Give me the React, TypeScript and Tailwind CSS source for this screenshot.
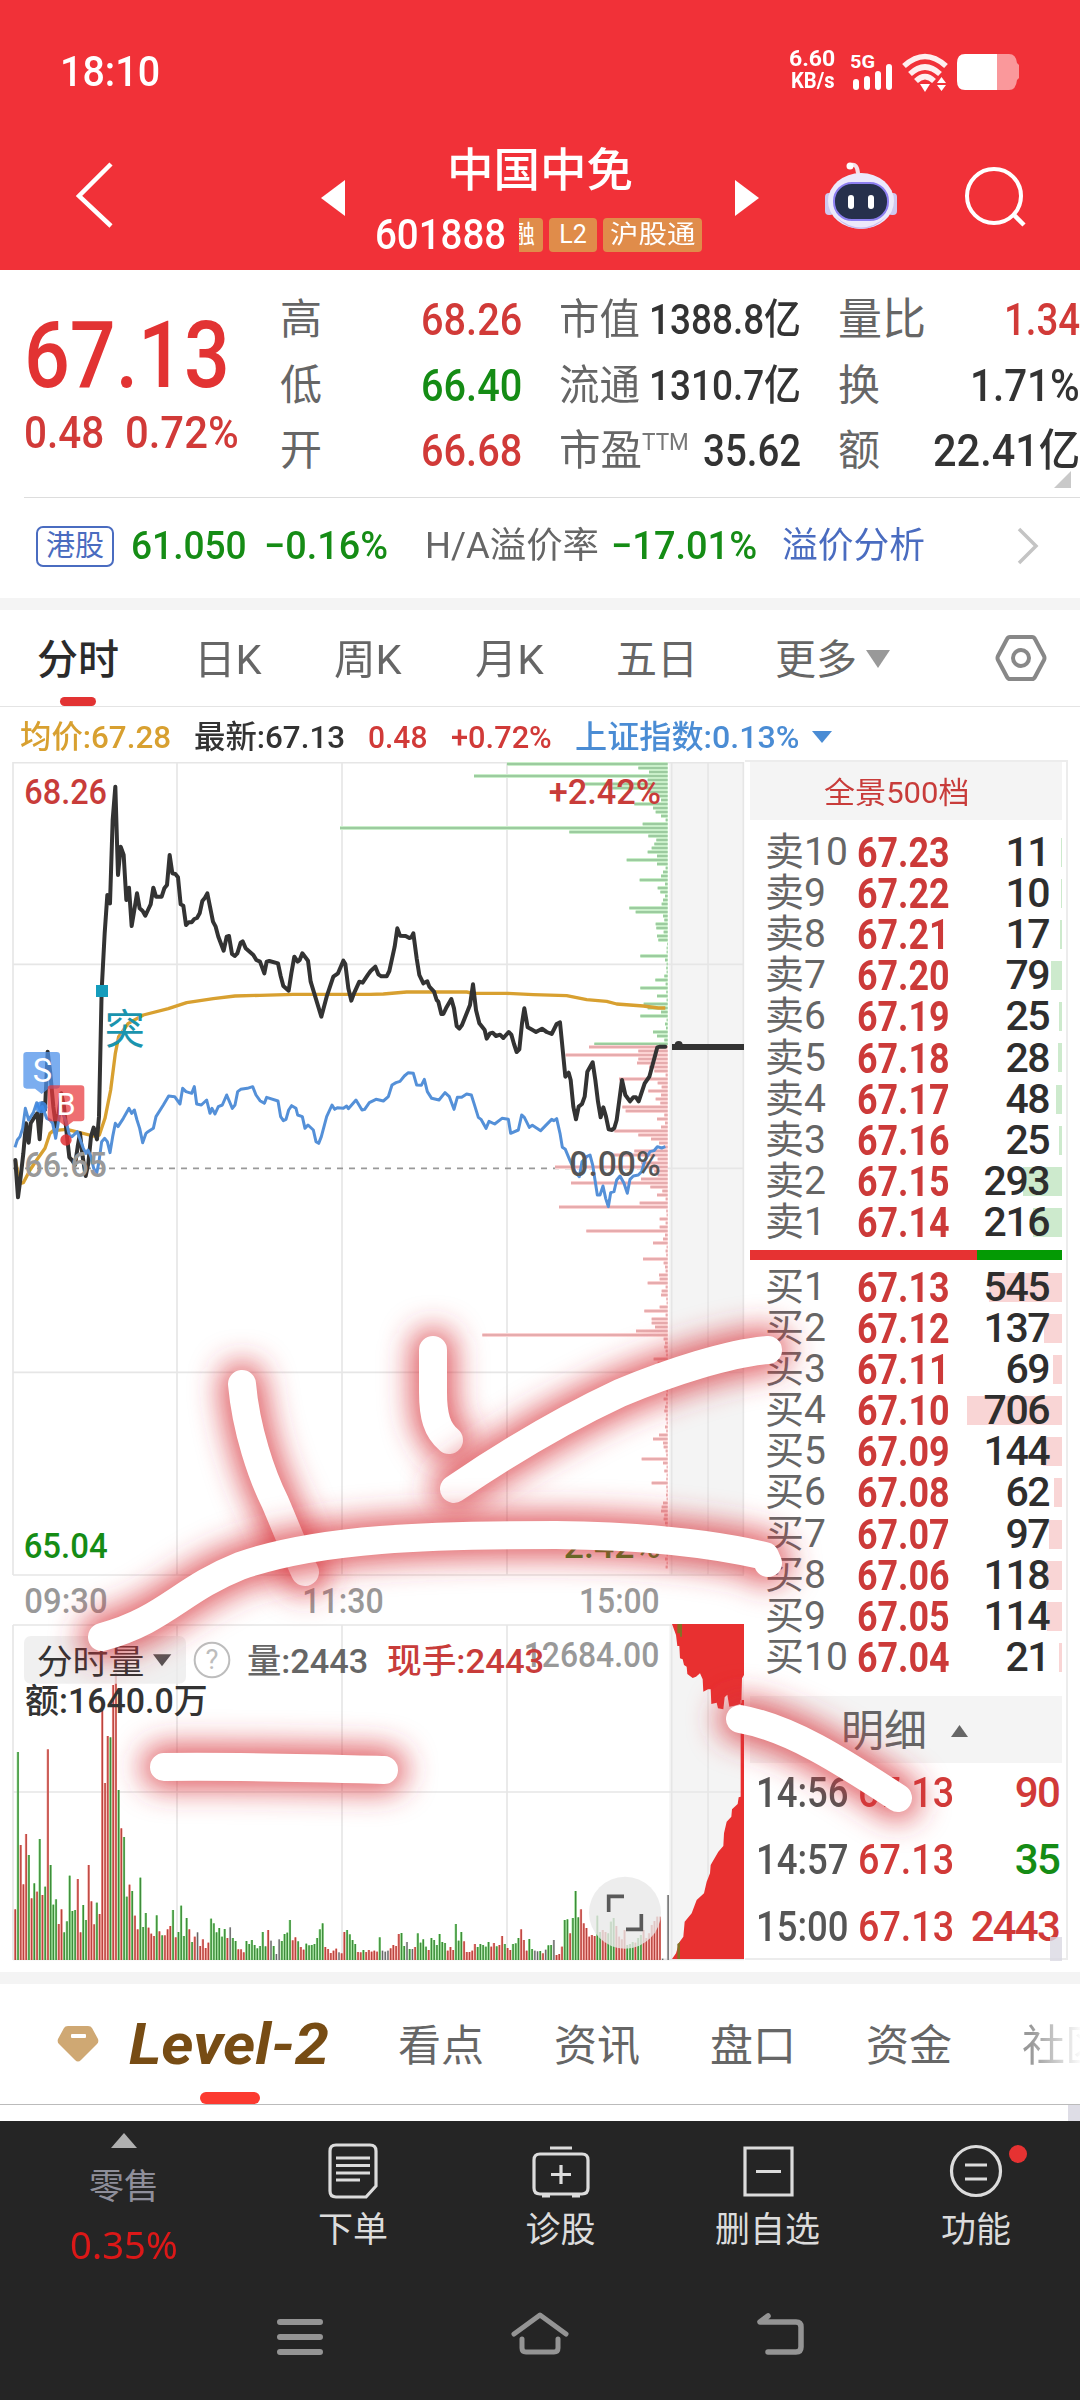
import React, { useLayoutEffect, useRef, useState } from 'react';

interface FitProps {
  className?: string;
  children: React.ReactNode;
}

// Squeezes its text horizontally so that it fills the width given by the class name
const Fit: React.FC<FitProps> = ({ className = '', children }) => {
  const outer = useRef<HTMLSpanElement>(null);
  const inner = useRef<HTMLSpanElement>(null);
  const [scale, setScale] = useState(1);

  useLayoutEffect(() => {
    if (outer.current && inner.current) {
      setScale(outer.current.clientWidth / inner.current.offsetWidth);
    }
  }, [children]);

  return (
    <span ref={outer} className={`block shrink-0 ${className}`}>
      <span ref={inner} className="inline-block origin-left whitespace-nowrap" style={{ transform: `scaleX(${scale})` }}>
        {children}
      </span>
    </span>
  );
};

const StatusBar = () => (
  <div className="flex h-[130px] items-end pb-[38px] pl-[60px] pr-[60px] text-white">
    <Fit className="w-[100px] text-[43px] font-medium leading-[42px]">18:10</Fit>
    <div className="flex-1" />
    <div className="flex flex-col items-end text-[22px] font-bold leading-[22px]">
      <Fit className="w-[46px]">6.60</Fit>
      <Fit className="w-[44px]">KB/s</Fit>
    </div>
    <svg className="ml-[16px] h-[40px] w-[43px]" viewBox="0 0 43 40" fill="#fff">
      <text x="-1" y="16" fontSize="18" fontWeight="700" textLength="25" lengthAdjust="spacingAndGlyphs">5G</text>
      <rect x="2" y="27" width="6" height="11" rx="3" />
      <rect x="13" y="24" width="6" height="14" rx="3" />
      <rect x="24" y="19" width="6" height="19" rx="3" />
      <rect x="35" y="12" width="6" height="26" rx="3" />
    </svg>
    <svg className="ml-[8px] h-[40px] w-[46px]" viewBox="0 0 46 40">
      <g fill="none" stroke="#fff" strokeOpacity=".92" strokeWidth="5.5">
        <path d="M2 14 Q23 -5 44 14" />
        <path d="M8 22 Q23 8 38 22" />
        <path d="M14 29 Q23 20 32 29" />
      </g>
      <path d="M18 32 h10 l-5 8z M35 31 l4.500 -6 l4.500 6z M35 33 l4.500 6 l4.500 -6z" fill="#fff" />
    </svg>
    <svg className="ml-[8px] h-[40px] w-[64px]" viewBox="0 0 64 40">
      <path d="M41 2 h12 q7 0 8 9 l2 2 v13 l-2 2 q-1 10 -8 10 h-12z" fill="#fa989b" />
      <path d="M41 2 H9 Q1 2 1 11 V29 Q1 38 9 38 H41z" fill="#fff" />
    </svg>
  </div>
);

const Robot = () => (
  <svg className="h-[70px] w-[76px]" viewBox="0 0 76 70">
    <path d="M28 4 q6 -2 7 8" fill="none" stroke="#f5dfe8" strokeWidth="4" strokeLinecap="round" />
    <circle cx="27" cy="5" r="3.500" fill="#fff" />
    <rect x="2" y="32" width="9" height="22" rx="4" fill="#cfc8f0" />
    <rect x="65" y="32" width="9" height="22" rx="4" fill="#cfc8f0" />
    <ellipse cx="38" cy="40" rx="33" ry="28" fill="#ece9fb" />
    <path d="M12 55 Q38 78 64 55 Q52 68 38 68 Q24 68 12 55z" fill="#c7bdf2" />
    <rect x="11" y="22" width="54" height="37" rx="18" fill="#26304c" stroke="#8d7ff0" strokeWidth="2" />
    <rect x="25" y="34" width="6" height="14" rx="3" fill="#fff" />
    <rect x="45" y="34" width="6" height="14" rx="3" fill="#fff" />
  </svg>
);

const NavBar = () => (
  <div className="flex h-[141px] text-white">
    <svg className="ml-[74px] mt-[30px] h-[70px] w-[42px]" viewBox="0 0 42 70">
      <path d="M37 4 L5 36 L37 66" fill="none" stroke="#fff" strokeWidth="4.500" />
    </svg>
    <svg className="ml-[205px] mt-[50px] h-[36px] w-[24px]" viewBox="0 0 24 36">
      <path d="M24 0 V36 L0 18z" fill="#fff" />
    </svg>
    <div className="ml-[29px] flex w-[330px] flex-col">
      <Fit className="ml-[73px] mt-[14px] w-[186px] text-[46px] font-medium leading-[52px]">中国中免</Fit>
      <div className="mt-[17px] flex h-[44px] items-center">
        <Fit className="ml-[1px] w-[131px] text-[42px] font-medium leading-[44px]">601888</Fit>
        <div className="ml-[13px] flex h-[34px] gap-[6px] text-[25px] leading-[33px]">
          <span className="flex w-[24px] justify-end overflow-hidden rounded-r-[4px] bg-[#e08c4a] pr-[8px]">融</span>
          <span className="w-[48px] rounded-[4px] bg-[#e08c4a] text-center">L2</span>
          <Fit className="w-[99px] rounded-[4px] bg-[#e08c4a]">&nbsp;沪股通&nbsp;</Fit>
        </div>
      </div>
    </div>
    <svg className="ml-[31px] mt-[50px] h-[36px] w-[24px]" viewBox="0 0 24 36">
      <path d="M0 0 V36 L24 18z" fill="#fff" />
    </svg>
    <div className="ml-[64px] mt-[31px]"><Robot /></div>
    <svg className="ml-[63px] mt-[34px] h-[66px] w-[68px]" viewBox="0 0 68 66">
      <circle cx="32" cy="32" r="27" fill="none" stroke="#fff" strokeWidth="4" />
      <path d="M51 50 L62 61" stroke="#fff" strokeWidth="4.500" />
    </svg>
  </div>
);

const RED = 'text-[#d13a38]';
const GREEN = 'text-[#158c15]';

const QuotePanel = () => (
  <div className="flex h-[227px] pt-[17px] text-[44px] leading-[66px] text-[#333]">
    <div className="w-[280px] pl-[24px]">
      <Fit className="mt-[21px] w-[206px] text-[92px] font-medium leading-[96px] text-[#e23333]">67.13</Fit>
      <div className={`-mt-px flex leading-[60px] ${RED}`}>
        <Fit className="w-[80px] font-medium">0.48</Fit>
        <Fit className="ml-[21px] w-[114px] font-medium">0.72%</Fit>
      </div>
    </div>
    <div className="flex-1">
      <div className="flex h-[66px]">
        <span className="w-[141px] text-[42px] text-[#666]">高</span>
        <Fit className={`w-[101px] font-medium ${RED}`}>68.26</Fit>
        <Fit className="ml-[37px] w-[81px] text-[42px] text-[#666]">市值</Fit>
        <div className="flex w-[161px] justify-end text-[42px] font-medium"><Fit className="w-[152px]">1388.8亿</Fit></div>
        <span className="ml-[37px] w-[91px] text-[44px] text-[#666]">量比</span>
        <div className="flex flex-1 justify-end"><Fit className={`w-[76px] font-medium ${RED}`}>1.34</Fit></div>
      </div>
      <div className="flex h-[65px]">
        <span className="w-[141px] text-[42px] text-[#666]">低</span>
        <Fit className={`w-[101px] font-medium ${GREEN}`}>66.40</Fit>
        <Fit className="ml-[37px] w-[81px] text-[42px] text-[#666]">流通</Fit>
        <div className="flex w-[161px] justify-end text-[42px] font-medium"><Fit className="w-[152px]">1310.7亿</Fit></div>
        <span className="ml-[37px] w-[91px] text-[42px] text-[#666]">换</span>
        <div className="flex flex-1 justify-end"><Fit className="w-[110px] font-medium">1.71%</Fit></div>
      </div>
      <div className="relative flex h-[65px]">
        <span className="w-[141px] text-[42px] text-[#666]">开</span>
        <Fit className={`w-[101px] font-medium ${RED}`}>66.68</Fit>
        <Fit className="ml-[37px] w-[83px] text-[42px] text-[#666]">市盈</Fit>
        <Fit className="w-[47px] text-[24px] leading-[48px] text-[#777]">TTM</Fit>
        <div className="flex w-[112px] justify-end font-medium"><Fit className="w-[98px]">35.62</Fit></div>
        <span className="ml-[37px] w-[50px] text-[42px] text-[#666]">额</span>
        <div className="flex flex-1 justify-end font-medium"><Fit className="w-[147px]">22.41亿</Fit></div>
        <svg className="absolute right-[9px] top-[53px] h-[17px] w-[17px]" viewBox="0 0 17 17"><path d="M17 0V17H0z" fill="#c9c9c9" /></svg>
      </div>
    </div>
  </div>
);

const HkRow = () => (
  <>
    <div className="ml-[24px] h-px bg-[#ddd]" />
    <div className={`flex h-[100px] items-center pb-[4px] text-[39px] leading-[60px] ${GREEN}`}>
      <div className="ml-[36px] flex h-[41px] w-[78px] items-center justify-center rounded-[7px] border-2 border-[#4a6cc0] text-[29px] leading-[36px] text-[#4a6cc0]">港股</div>
      <Fit className="ml-[17px] w-[116px] font-medium">61.050</Fit>
      <Fit className="ml-[17px] w-[124px] font-medium">−0.16%</Fit>
      <Fit className="ml-[37px] w-[174px] text-[36px] text-[#666]">H/A溢价率</Fit>
      <Fit className="ml-[12px] w-[146px] font-medium">−17.01%</Fit>
      <Fit className="ml-[25px] w-[143px] text-[36px] text-[#4a6cc0]">溢价分析</Fit>
      <svg className="ml-[92px] h-[38px] w-[22px]" viewBox="0 0 22 38"><path d="M2 2 L19 19 L2 36" fill="none" stroke="#c4c4c4" strokeWidth="3.500" /></svg>
    </div>
  </>
);

const ChartTabs = () => (
  <div className="flex h-[97px] border-b border-[#e4e4e4] text-[41px] leading-[100px] text-[#666]">
    <div className="ml-[37px] w-[82px]">
      <div className="h-[87px] font-medium text-[#2b2b2b]">分时</div>
      <div className="ml-[23px] h-[9px] w-[36px] rounded-[5px] bg-[#e23333]" />
    </div>
    <Fit className="ml-[75px] w-[68px]">日K</Fit>
    <Fit className="ml-[72px] w-[68px]">周K</Fit>
    <Fit className="ml-[73px] w-[69px]">月K</Fit>
    <span className="ml-[72px] whitespace-nowrap">五日</span>
    <span className="ml-[77px] whitespace-nowrap">更多</span>
    <svg className="ml-[9px] mt-[40px] h-[18px] w-[24px]" viewBox="0 0 24 18"><path d="M0 0H24L12 18z" fill="#999" /></svg>
    <svg className="ml-[105px] mt-[22px] h-[52px] w-[52px]" viewBox="0 0 52 52" fill="none" stroke="#888" strokeWidth="4">
      <path d="M15 5 H37 Q39 5 40 7 L49 24 Q50 26 49 28 L40 45 Q39 47 37 47 H15 Q13 47 12 45 L3 28 Q2 26 3 24 L12 7 Q13 5 15 5z" />
      <circle cx="26" cy="26" r="8" />
    </svg>
  </div>
);

const Legend = () => (
  <div className="flex h-[55px] items-center pl-[20px] pt-[4px] text-[32px] font-medium leading-[50px] text-[#333]">
    <Fit className="w-[151px] text-[#d8a030]">均价:67.28</Fit>
    <Fit className="ml-[23px] w-[151px]">最新:67.13</Fit>
    <Fit className={`ml-[23px] w-[59px] ${RED}`}>0.48</Fit>
    <Fit className={`ml-[24px] w-[101px] ${RED}`}>+0.72%</Fit>
    <Fit className="ml-[23px] w-[224px] text-[#4a8cd4]">上证指数:0.13%</Fit>
    <svg className="ml-[13px] h-[12px] w-[20px]" viewBox="0 0 20 12"><path d="M0 0H20L10 12z" fill="#4a8cd4" /></svg>
  </div>
);

// Chart geometry is kept in thirds of a pixel
const PRICE =
  '46,1260 54,1372 62,1310 70,1240 78,1150 86,1208 92,1150 98,1140 104,1130 112,1120 119,1198 127,1090 135,1110 143,935 151,1000 160,1100 168,1160 176,1120 184,1060 192,1100 200,1180 208,1252 217,1262 225,1275 233,1220 240,1180 248,1250 257,1308 265,1270 273,1190 281,1163 291,1198 297,1130 305,750 314,580 322,465 330,490 338,240 346,140 354,405 362,320 371,345 379,480 387,443 395,558 403,510 411,460 419,505 428,513 436,527 444,510 452,493 460,443 468,470 485,470 493,445 501,435 509,345 517,400 526,402 534,412 542,493 550,497 558,555 566,547 575,547 583,537 591,534 599,520 607,483 615,473 622,460 631,505 639,545 647,560 655,590 671,632 680,590 687,588 696,642 704,648 712,640 722,608 728,604 737,625 760,645 769,660 780,665 793,700 800,665 808,663 834,670 842,708 850,738 866,752 874,700 883,650 893,665 899,660 907,640 924,662 932,725 964,830 980,770 1000,710 1014,700 1030,662 1036,672 1045,745 1054,782 1062,760 1078,725 1088,728 1104,704 1112,693 1126,680 1135,703 1144,709 1160,709 1168,693 1184,620 1192,565 1200,587 1217,588 1228,594 1234,592 1240,580 1250,655 1258,705 1270,730 1282,724 1288,740 1302,755 1310,780 1315,785 1324,822 1330,822 1338,805 1354,777 1362,805 1370,858 1378,866 1386,855 1410,795 1419,733 1428,810 1438,850 1454,870 1460,896 1470,880 1478,878 1488,888 1500,884 1510,894 1526,876 1534,884 1542,912 1550,936 1558,928 1566,850 1573,805 1583,862 1594,868 1608,876 1626,866 1640,876 1655,882 1670,852 1680,847 1696,1010 1706,998 1712,1020 1720,1100 1728,1138 1736,1100 1746,1092 1754,1070 1762,995 1778,967 1786,1020 1794,1085 1802,1132 1810,1102 1818,1130 1826,1168 1836,1170 1843,1164 1850,1140 1858,1080 1866,1020 1876,1065 1890,1084 1900,1072 1908,1072 1916,1084 1934,1030 1948,1010 1972,922 1980,920 1996,920';

const AVERAGE =
  '46,1260 54,1300 62,1330 70,1328 90,1290 110,1260 135,1225 150,1180 160,1172 200,1168 240,1178 280,1188 298,1185 315,1135 332,1050 346,940 356,890 385,850 430,825 505,806 560,788 640,776 705,768 780,766 880,763 1110,763 1150,762 1220,756 1400,756 1420,760 1520,760 1600,764 1700,767 1760,779 1820,784 1850,792 1930,798 1975,804 1996,804';

const INDEX =
  '45,1222 52,1200 60,1190 68,1165 76,1105 86,1140 100,1118 110,1088 119,1108 127,1100 140,1135 150,1140 158,1150 167,1195 182,1105 200,1150 208,1185 216,1190 232,1175 250,1225 258,1240 264,1230 273,1250 281,1285 290,1300 297,1265 305,1205 314,1195 322,1205 330,1238 338,1190 346,1150 354,1160 370,1135 387,1105 395,1120 403,1110 411,1140 419,1165 428,1208 438,1180 444,1175 460,1165 468,1130 490,1095 506,1068 524,1070 540,1092 548,1045 558,1055 575,1060 583,1040 590,1092 604,1095 620,1080 630,1120 636,1105 645,1122 655,1100 667,1095 680,1065 697,1105 705,1095 713,1055 722,1048 742,1045 758,1040 768,1065 780,1082 793,1090 800,1072 834,1083 842,1130 850,1142 858,1138 866,1110 875,1097 888,1105 893,1125 907,1130 915,1165 924,1155 940,1170 948,1205 956,1210 964,1190 980,1130 996,1095 1004,1108 1012,1103 1030,1105 1040,1098 1045,1106 1068,1080 1086,1110 1094,1108 1108,1088 1128,1078 1138,1080 1150,1083 1165,1070 1176,1035 1188,1028 1200,1024 1213,1008 1225,998 1240,1000 1250,1035 1264,1036 1273,1018 1282,1055 1295,1075 1317,1080 1335,1058 1348,1070 1362,1108 1372,1072 1385,1072 1400,1062 1414,1065 1422,1090 1435,1132 1443,1138 1458,1165 1467,1144 1484,1152 1506,1135 1525,1138 1532,1180 1555,1170 1565,1125 1573,1132 1588,1162 1597,1156 1622,1172 1655,1138 1662,1142 1670,1136 1680,1180 1687,1222 1696,1228 1710,1262 1725,1295 1738,1310 1746,1265 1760,1250 1770,1245 1778,1275 1785,1320 1792,1365 1800,1365 1809,1338 1817,1375 1825,1400 1832,1358 1842,1355 1850,1320 1860,1308 1872,1330 1882,1360 1890,1318 1900,1308 1915,1305 1925,1295 1935,1260 1950,1235 1962,1232 1972,1220 1985,1224 1996,1220';

// Order book widths, one price step apart
const ASK_DEPTH = [
  482, 88, 56, 581, 60, 253, 180, 60, 30, 20, 100, 44, 36, 20, 6, 75, 983, 295, 58, 34, 40, 48, 60, 32, 123, 32, 6, 14, 20, 84,
  8, 30, 22, 8, 14, 18, 115, 96, 14, 10, 36, 34, 12, 32, 28, 2, 3, 3, 82, 8, 3, 4, 3, 10, 37, 6, 82, 4, 32, 3, 72, 60, 20, 82,
  3, 8, 5, 44, 32, 10, 220,
];
const BID_DEPTH = [
  236, 88, 306, 88, 92, 56, 40, 6, 146, 30, 18, 58, 20, 36, 22, 136, 126, 10, 32, 8, 20, 160, 88, 50, 26, 10, 100, 170, 30, 80,
  338, 40, 30, 80, 290, 52, 16, 32, 6, 84, 326, 4, 3, 24, 6, 24, 244, 8, 14, 44, 3, 6, 4, 74, 12, 8, 6, 26, 24, 60, 6, 18, 20, 4,
  3, 24, 70, 6, 48, 48, 38, 95, 556, 12, 8, 10, 6, 4, 42, 30, 8, 4, 6, 10, 4, 8, 3, 5, 12, 4, 8, 10, 4, 6, 3, 8, 4, 26, 44, 14, 12,
  6, 4, 78, 14, 3, 10, 3, 4, 48, 4, 3, 5, 3, 14, 18, 20, 10, 12, 8, 6, 4, 8, 3, 6, 10, 4, 3, 8, 3, 6,
];

// Minute volume bars: colour letter and height
const VOLUME =
  'r152 g624 r345 r227 r378 g315 r185 g230 r205 g363 r195 g220 r632 g285 g166 g182 r108 r152 g83 g116 g253 g147 g150 r243 r83 g165 g120 r285 r176 r107 g172 r138 r750 r531 r672 g668 r825 r860 g510 r395 g369 g190 r226 g207 r133 r92 g247 g99 g141 r97 r79 r72 g134 r86 g74 r74 r92 r102 g150 r68 g84 g163 g72 g126 r92 g54 r70 k83 r42 r62 r36 r52 g124 g110 g83 g96 g70 g93 r66 k98 g66 g57 r32 r32 r23 g57 g48 g60 g45 g35 g42 g84 g41 r90 k58 g42 k18 k62 g57 g78 g82 g120 r59 r68 g56 r39 r31 g49 g44 g45 g48 g66 g92 g110 r39 r33 r21 r28 r34 k23 r20 r84 g90 g77 g60 g48 r24 r23 g30 r24 r30 r25 r28 r25 g68 k28 k25 k28 r35 r45 r42 r78 g81 g42 k54 g33 k33 r39 g80 g52 g62 g40 r30 g66 g60 g45 g78 g54 g51 r28 r39 r30 g108 g58 g84 r56 r24 r24 r28 r48 g39 g48 g45 g40 g54 r40 r51 g41 r45 r72 g48 r36 r30 g48 g50 g66 r92 r60 r28 g63 g33 k28 k26 g27 r20 k31 g44 g45 k60 r15 r18 r40 g120 g122 r80 g126 g207 g128 r152 r110 r96 r70 r75 r72 g133 g84 r90 r84 g80 g115 g126 r102 r70 r62 r90 g45 g48 g54 r52 g66 g75 r90 r66 r80 r105 r117 r130 r130 k4 k0 k195';

const BAR_COLORS: Record<string, [string, string]> = {
  r: ['#f79a94', '#b8443f'],
  g: ['#8fe08a', '#3f8a3c'],
  k: ['#dcdcdc', '#666666'],
};

interface LabelProps {
  x: number;
  end: number;
  y: number;
  size?: number;
  fill: string;
  weight?: number;
  children: string;
}

const Label = ({ x, end, y, size = 107, fill, weight = 500, children }: LabelProps) => (
  <text x={x - 5} y={y} fontSize={size} fontWeight={weight} fill={fill} textLength={end - x + 10} lengthAdjust="spacingAndGlyphs">
    {children}
  </text>
);

const Charts = () => (
  <svg className="h-[1210px] w-[745px] shrink-0" viewBox="0 66 2235 3630">
    <rect x="2008" y="62" width="224" height="2443" fill="#f4f4f4" />
    <rect x="2008" y="2655" width="224" height="1005" fill="#f4f4f4" />
    <g stroke="#e6e6e6" strokeWidth="5" fill="none">
      <path d="M39 68H2232 M39 673H2232 M1998 1285H2232 M39 1897H2232 M39 2505H2232" />
      <path d="M39 66V2505 M531 66V2505 M1026 66V2505 M1521 66V2505 M2015 66V2505 M2124 66V2505 M2230 66V2505" />
      <path d="M39 2655H2232 M39 3156H2232 M39 3658H2232" />
      <path d="M39 2655V3660 M531 2655V3660 M1026 2655V3660 M1521 2655V3660 M2015 2655V3660 M2124 2655V3660" />
    </g>
    <path d="M39 1285H1998" stroke="#999" strokeWidth="5" strokeDasharray="18 18" />

    {ASK_DEPTH.map((w, i) => (
      <g key={i}>
        <rect x={2003 - w} y={66 + i * 12} width={w} height="12" fill="#c9efc9" />
        <rect x={2003 - w} y={69 + i * 12} width={w} height="6" fill="#9ccb9f" />
      </g>
    ))}
    {BID_DEPTH.map((w, i) => (
      <g key={i}>
        <rect x={2003 - w} y={915 + i * 12} width={w} height="12" fill="#fbd3d3" />
        <rect x={2003 - w} y={918 + i * 12} width={w} height="6" fill="#e6abad" />
      </g>
    ))}

    <g fill="none" strokeLinejoin="round">
      <polyline points={AVERAGE} stroke="#d8a030" strokeWidth="10" />
      <polyline points={PRICE} stroke="#333" strokeWidth="12" strokeLinecap="round" />
      <polyline points={INDEX} stroke="#5490d8" strokeWidth="9" />
    </g>
    <path d="M2016 921H2232" stroke="#333" strokeWidth="18" />
    <circle cx="2036" cy="915" r="12" fill="#333" />

    <rect x="288" y="735" width="36" height="36" fill="#149cbc" />
    <Label x={319} end={429} y={912} size={122} fill="#1a94ae" weight={400}>突</Label>
    <path d="M80 936H170Q180 936 180 946V1036Q180 1046 170 1046H145L125 1062L105 1046H80Q70 1046 70 1036V946Q70 936 80 936z" fill="#4f92ea" fillOpacity=".75" />
    <text x="127" y="1026" fontSize="98" fill="#fff" textAnchor="middle">S</text>
    <circle cx="124" cy="1102" r="18" fill="#3d8ae8" fillOpacity=".85" />
    <path d="M153 1036H243Q253 1036 253 1046V1134Q253 1144 243 1144H220L198 1160L176 1144H153Q143 1144 143 1134V1046Q143 1036 153 1036z" fill="#e8383c" fillOpacity=".72" />
    <text x="198" y="1124" fontSize="92" fill="#fff" textAnchor="middle">B</text>
    <circle cx="198" cy="1200" r="17" fill="#e03034" fillOpacity=".85" />

    <Label x={78} end={316} y={191} fill="#c83c3a">68.26</Label>
    <Label x={1651} end={1978} y={191} fill="#c83c3a">+2.42%</Label>
    <Label x={78} end={316} y={1310} fill="#999">66.65</Label>
    <Label x={1713} end={1977} y={1308} fill="#555">0.00%</Label>
    <Label x={76} end={318} y={2455} fill="#158c15">65.04</Label>
    <Label x={1660} end={1977} y={2455} fill="#158c15">-2.42%</Label>
    <Label x={78} end={318} y={2619} fill="#999">09:30</Label>
    <Label x={912} end={1146} y={2619} fill="#999">11:30</Label>
    <Label x={1742} end={1974} y={2619} fill="#999">15:00</Label>

    {VOLUME.split(' ').map((bar, i) => {
      const [soft, dark] = BAR_COLORS[bar[0]];
      const h = Number(bar.slice(1));
      return (
        <g key={i}>
          <rect x={42 + i * 8.16} y={3660 - h} width="7" height={h} fill={soft} />
          <rect x={44 + i * 8.16} y={3660 - h} width="4" height={h} fill={dark} />
        </g>
      );
    })}
    <path
      transform="translate(1110 2580)"
      fill="#e83030"
      d="M906 72 L918 105 L922 138 L928 138 L930 175 L938 178 L942 195 L950 200 L952 222 L968 234 L978 230 L990 220 L998 238 L1000 275 L1014 268 L1022 268 L1024 312 L1040 308 L1044 325 L1060 328 L1064 292 L1072 284 L1078 320 L1100 316 L1114 310 L1116 235 L1122 225 V72z
         M906 1077 L918 1060 L928 1027 L940 1010 L944 965 L965 940 L980 900 L1002 880 L1010 845 L1020 820 L1022 795 L1045 755 L1060 738 L1062 700 L1070 665 L1084 650 L1086 628 L1103 612 L1106 592 L1112 590 V300 H1122 V1077z"
    />
    <path d="M2032 2652H2046V2690H2040V2680H2032z M2032 3612L2040 3606V3657H2032z" fill="#857024" />

    <rect x="72" y="2688" width="486" height="143" rx="20" fill="#ebebeb" fillOpacity=".75" />
    <Label x={115} end={428} y={2803} size={104} fill="#333" weight={400}>分时量</Label>
    <path d="M459 2743H514L486 2779z" fill="#555" />
    <circle cx="636" cy="2760" r="52" fill="none" stroke="#bdbdbd" strokeWidth="6" />
    <text x="636" y="2788" fontSize="82" fill="#bdbdbd" textAnchor="middle">?</text>
    <Label x={746} end={1100} y={2799} size={102} fill="#666">量:2443</Label>
    <Label x={1576} end={1973} y={2782} size={107} fill="#999">12684.00</Label>
    <Label x={1166} end={1628} y={2799} size={102} fill="#c83c3a">现手:2443</Label>
    <Label x={80} end={618} y={2918} size={104} fill="#333">额:1640.0万</Label>

    <circle cx="1875" cy="3518" r="108" fill="#e8e8e8" fillOpacity=".8" />
    <path d="M1826 3516V3469H1872 M1878 3568H1924V3522" fill="none" stroke="#5a5a5a" strokeWidth="11" />
  </svg>
);

interface Level {
  label: string;
  price: string;
  qty: number;
}

const SELLS: Level[] = [
  { label: '卖10', price: '67.23', qty: 11 },
  { label: '卖9', price: '67.22', qty: 10 },
  { label: '卖8', price: '67.21', qty: 17 },
  { label: '卖7', price: '67.20', qty: 79 },
  { label: '卖6', price: '67.19', qty: 25 },
  { label: '卖5', price: '67.18', qty: 28 },
  { label: '卖4', price: '67.17', qty: 48 },
  { label: '卖3', price: '67.16', qty: 25 },
  { label: '卖2', price: '67.15', qty: 293 },
  { label: '卖1', price: '67.14', qty: 216 },
];

const BUYS: Level[] = [
  { label: '买1', price: '67.13', qty: 545 },
  { label: '买2', price: '67.12', qty: 137 },
  { label: '买3', price: '67.11', qty: 69 },
  { label: '买4', price: '67.10', qty: 706 },
  { label: '买5', price: '67.09', qty: 144 },
  { label: '买6', price: '67.08', qty: 62 },
  { label: '买7', price: '67.07', qty: 97 },
  { label: '买8', price: '67.06', qty: 118 },
  { label: '买9', price: '67.05', qty: 114 },
  { label: '买10', price: '67.04', qty: 21 },
];

const LevelRow = ({ level, barColor }: { level: Level; barColor: string }) => (
  <div className="relative flex h-[41.1px] items-center pl-[15px] pr-[13px] leading-[41px]">
    <div className={`absolute right-0 top-[6px] h-[29px] ${barColor}`} style={{ width: Math.max(1, (level.qty / 706) * 95) }} />
    <span className="relative w-[92px] whitespace-nowrap text-[39px] text-[#666]">{level.label}</span>
    <Fit className="relative w-[93px] text-[42px] font-bold text-[#cc3a39]">{level.price}</Fit>
    <span className="relative flex-1 text-right text-[41px] font-medium tracking-[-1.5px] text-[#2e2e2e]">{level.qty}</span>
  </div>
);

const TRADES = [
  { time: '14:56', qty: '90', color: RED },
  { time: '14:57', qty: '35', color: GREEN },
  { time: '15:00', qty: '2443', color: RED },
];

const OrderBook = () => (
  <div className="mt-[-2px] h-[1200px] w-[323px] border-b-2 border-r-2 border-t-2 border-[#ececec] bg-white pl-[5px] pr-[4px]">
    <div className="flex h-[58px] items-center justify-center bg-[#f4f4f4] pl-0 pr-[18px] pt-[2px]">
      <Fit className="w-[146px] text-[30px] text-[#c83c3a]">全景500档</Fit>
    </div>
    <div className="mt-[12px]">
      {SELLS.map(l => <LevelRow key={l.label} level={l} barColor="bg-[#cdeacd]" />)}
    </div>
    <div className="mt-[7px] flex h-[10px]">
      <div className="w-[227px] bg-[#e63232]" />
      <div className="flex-1 bg-[#049a04]" />
    </div>
    <div className="mt-[7px]">
      {BUYS.map(l => <LevelRow key={l.label} level={l} barColor="bg-[#f9d5d5]" />)}
    </div>
    <div className="mt-[18px] flex h-[67px] items-center bg-[#f4f4f4] pl-[91px] pt-[3px] text-[43px] leading-[64px] text-[#666]">
      明细
      <svg className="ml-[24px] h-[12px] w-[17px]" viewBox="0 0 17 12"><path d="M0 12H17L8.500 0z" fill="#666" /></svg>
    </div>
    <div className="relative mt-[-4px]">
      {TRADES.map(t => (
        <div key={t.time} className="flex h-[67px] pl-[6px] pr-[3px] text-[42px] font-medium leading-[67px]">
          <Fit className="w-[93px] text-[#555]">{t.time}</Fit>
          <Fit className={`ml-[9px] w-[96px] ${RED}`}>67.13</Fit>
          <span className={`flex-1 text-right tracking-[-1.8px] ${t.color}`}>{t.qty}</span>
        </div>
      ))}
      <div className="absolute bottom-[-1px] right-0 h-[24px] w-[12px] bg-[#d9d8e2]/80" />
    </div>
  </div>
);

const STROKES = [
  'M242 1384 C246 1430 262 1476 275 1502 C287 1530 297 1556 305 1572',
  'M433 1350 V1392 C433 1416 437 1430 449 1440',
  'M454 1489 C510 1451 560 1421 620 1393 C670 1372 730 1353 768 1350',
  'M102 1637 C165 1620 180 1590 240 1566 C320 1538 430 1535 556 1535 C640 1536 710 1543 765 1556 L768 1563',
  'M164 1767 C240 1766 310 1768 384 1770',
  'M740 1719 C790 1728 840 1760 898 1798',
];

const Doodle = () => (
  <svg className="pointer-events-none absolute left-0 top-0 h-[1210px] w-[1080px]" viewBox="0 762 1080 1210">
    <defs>
      <filter id="glow" filterUnits="userSpaceOnUse" x="0" y="1200" width="1080" height="772">
        <feGaussianBlur stdDeviation="15" />
      </filter>
    </defs>
    {STROKES.map((d, i) => (
      <g key={i} fill="none" strokeLinecap="round" strokeLinejoin="round">
        <path d={d} stroke="#d8363c" strokeOpacity=".8" strokeWidth="44" filter="url(#glow)" />
        <path d={d} stroke="#fff" strokeWidth="28" />
      </g>
    ))}
  </svg>
);

const InfoTabs = () => (
  <div className="flex h-[121px] overflow-hidden border-b border-[#bbb] text-[43px] leading-[124px] text-[#666]">
    <svg className="ml-[57px] mt-[40px] h-[40px] w-[42px] shrink-0" viewBox="0 0 42 40">
      <path d="M11 2H31Q34 2 35 4L41 15Q42 18 40 20L24 36Q21 39 18 36L2 20Q0 18 1 15L7 4Q8 2 11 2z" fill="#cfa873" />
      <rect x="14" y="10" width="15" height="4" rx="1" fill="#fff" />
    </svg>
    <div className="ml-[30px] w-[204px] shrink-0">
      <Fit className="h-[108px] w-[200px] text-[57px] font-bold italic leading-[122px] text-[#774c14]">Level-2</Fit>
      <div className="ml-[71px] h-[12px] w-[60px] rounded-[6px] bg-[#fc3a30]" />
    </div>
    <div className="ml-[65px] flex shrink-0 gap-[70px] whitespace-nowrap">
      <span>看点</span>
      <span>资讯</span>
      <span>盘口</span>
      <span>资金</span>
      <span className="bg-gradient-to-r from-[#999] from-10% to-white to-70% bg-clip-text text-transparent">社区</span>
    </div>
  </div>
);

const ACTIONS = [
  {
    label: '下单',
    cell: 'w-[210px]',
    icon: (
      <>
        <path d="M12 4H46Q52 4 52 10V45L42 56H12Q6 56 6 50V10Q6 4 12 4z" />
        <path d="M12 17H46 M12 24.500H46 M12 32H46 M12 39H36" />
      </>
    ),
  },
  {
    label: '诊股',
    cell: 'w-[205px]',
    icon: (
      <>
        <path d="M8 13H50Q56 13 56 19V47Q56 53 50 53H8Q2 53 2 47V19Q2 13 8 13z M18 7H40 M29 24V43 M19 33.500H39" />
        <path d="M10 55H18 M40 55H48" />
      </>
    ),
  },
  {
    label: '删自选',
    cell: 'w-[209px]',
    icon: <path d="M6 7H53V54H6z M17 30.500H42" />,
  },
  {
    label: '功能',
    cell: 'w-[208px]',
    icon: (
      <>
        <circle cx="29" cy="30" r="24.500" />
        <path d="M18 24H40 M18 38H40" />
      </>
    ),
  },
];

const ActionBar = () => (
  <div className="relative flex h-[149px] text-[35px] text-[#dcdcdc]">
    <div className="flex w-[248px] flex-col items-center text-[#8f8f9b]">
      <svg className="mt-[12px] h-[15px] w-[26px]" viewBox="0 0 26 15"><path d="M0 15H26L13 0z" fill="#b0b0b0" /></svg>
      <span className="mt-[17px] leading-[46px]">零售</span>
      <Fit className="mt-[10px] w-[108px] font-['Noto_Sans'] text-[39px] leading-[46px] text-[#dc1818]">0.35%</Fit>
    </div>
    {ACTIONS.map(a => (
      <div key={a.label} className={`flex flex-col items-center ${a.cell}`}>
        <svg className="mt-[20px] h-[60px] w-[58px]" viewBox="0 0 58 60" fill="none" stroke="#dcdcdc" strokeWidth="3.200">{a.icon}</svg>
        <span className="mt-[7px] leading-[46px]">{a.label}</span>
      </div>
    ))}
    <div className="absolute right-[53px] top-[24px] h-[18px] w-[18px] rounded-full bg-[#e63232]" />
  </div>
);

const SystemNav = () => (
  <div className="flex h-[130px] pt-[40px]">
    <svg className="ml-[276px] h-[48px] w-[48px]" viewBox="0 0 48 48" stroke="#949494" strokeWidth="6" strokeLinecap="round">
      <path d="M4 12H44 M4 27H44 M4 42H44" />
    </svg>
    <svg className="ml-[186px] h-[48px] w-[60px]" viewBox="0 0 60 48" fill="none" stroke="#949494" strokeWidth="5" strokeLinecap="round" strokeLinejoin="round">
      <path d="M4 24L30 5L56 24 M12 29V38Q12 42 16 42H44Q48 42 48 38V29" />
    </svg>
    <svg className="ml-[184px] h-[48px] w-[52px]" viewBox="0 0 52 48" fill="none" stroke="#949494" strokeWidth="5.500" strokeLinecap="round" strokeLinejoin="round">
      <path d="M14 6L6 12H42Q47 12 47 17V37Q47 42 42 42H14" />
    </svg>
  </div>
);

export default function App() {
  return (
    <div className="h-[2400px] w-[1080px] overflow-hidden bg-white font-['Roboto','Noto_Sans_CJK_SC',sans-serif]">
      <header className="h-[270px] bg-[#f13138]">
        <StatusBar />
        <NavBar />
      </header>
      <QuotePanel />
      <HkRow />
      <div className="h-[12px] bg-[#f4f4f4]" />
      <ChartTabs />
      <Legend />
      <main className="relative flex h-[1210px]">
        <Charts />
        <OrderBook />
        <Doodle />
      </main>
      <div className="h-[12px] bg-[#f4f4f4]" />
      <InfoTabs />
      <div className="flex h-[16px] justify-end"><div className="w-[12px] bg-[#dedde6]" /></div>
      <footer className="h-[280px] bg-[#252525]">
        <ActionBar />
        <SystemNav />
      </footer>
    </div>
  );
}
